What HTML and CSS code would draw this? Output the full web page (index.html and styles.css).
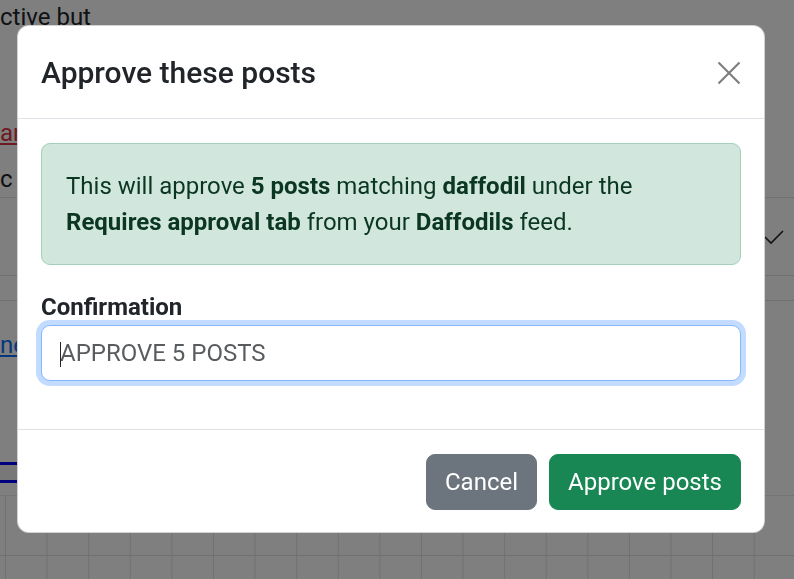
FILE: index.html
```html
<!DOCTYPE html>
<html lang="en">
<head>
<meta charset="utf-8">
<title>Approve these posts</title>
<link rel="stylesheet" href="styles.css">
</head>
<body>
<div class="page">
  <div class="pg-line pg-top">ctive but</div>
  <div class="pg-line pg-red"><a class="link-red" href="#">an</a></div>
  <div class="pg-row pg-row-a">c</div>
  <div class="pg-row pg-row-b">
    <svg class="check" width="20" height="16" viewBox="0 0 20 16"><polyline points="1,8 7,14 19,2" fill="none" stroke="#212529" stroke-width="1.6"/></svg>
  </div>
  <div class="pg-row pg-row-c"></div>
  <div class="pg-line pg-blue"><a class="link-blue" href="#">ne</a></div>
  <div class="pg-bars"></div>
  <div class="pg-grid"></div>
</div>

<div class="backdrop"></div>

<div class="modal">
  <div class="modal-header">
    <h5 class="modal-title">Approve these posts</h5>
    <button class="btn-close" type="button" aria-label="Close">
      <svg width="24" height="24" viewBox="0 0 16 16"><path d="M1 1L15 15M15 1L1 15" stroke="#000" stroke-width="1.45" fill="none"/></svg>
    </button>
  </div>
  <div class="modal-body">
    <div class="alert">This will approve <strong>5 posts</strong> matching <strong>daffodil</strong> under the <strong>Requires approval tab</strong> from your <strong>Daffodils</strong> feed.</div>
    <div class="field">
      <label class="form-label" for="confirm">Confirmation</label>
      <div class="input-wrap">
        <input id="confirm" class="form-control" type="text" placeholder="APPROVE 5 POSTS">
        <span class="caret"></span>
      </div>
    </div>
  </div>
  <div class="modal-footer">
    <button class="btn btn-secondary" type="button">Cancel</button>
    <button class="btn btn-success" type="button">Approve posts</button>
  </div>
</div>
</body>
</html>
```

FILE: styles.css
```css
* { box-sizing: border-box; }
html, body { margin: 0; padding: 0; }
body {
  font-family: Roboto, "Liberation Sans", sans-serif;
  font-size: 24px;
  line-height: 36px;
  color: #212529;
  background: #fff;
  width: 794px;
  height: 579px;
  overflow: hidden;
}

/* underlying page */
.page { width: 794px; }
.pg-line { height: 36px; line-height: 36px; white-space: nowrap; }
.pg-top { margin-top: -1px; }
.pg-red { margin-top: 80px; }
.link-red { color: #dc3545; text-decoration: underline; }
.link-blue { color: #0d6efd; text-decoration: underline; }
.pg-row { border-bottom: 1px solid #dee2e6; }
.pg-row-a { height: 47px; padding-top: 10px; line-height: 36px; }
.pg-row-b { height: 78px; display: flex; justify-content: flex-end; align-items: center; padding-right: 10px; }
.pg-row-c { height: 25px; }
.pg-blue { margin-top: 26px; }
.pg-bars {
  margin-top: 99px;
  width: 420px;
  height: 21px;
  border-top: 3px solid #0000ff;
  border-bottom: 3px solid #0000ff;
  background: #f0f0f0;
}
.pg-grid {
  margin-top: 12px;
  height: 100px;
  border-top: 1px solid #e6e8ea;
  background-image:
    linear-gradient(to bottom, transparent 59px, #dee2e6 59px, #dee2e6 60px, transparent 60px),
    linear-gradient(to right, #dee2e6 1px, transparent 1px);
  background-size: 100% 60px, 41.6px 100%;
  background-position: 0 0, 5px 0;
}

/* backdrop */
.backdrop {
  position: fixed;
  inset: 0;
  background: rgba(0, 0, 0, 0.5);
}

/* modal */
.modal {
  position: fixed;
  left: 17px;
  top: 25px;
  width: 748px;
  background: #fff;
  border: 1px solid rgba(0, 0, 0, 0.175);
  border-radius: 12px;
  display: flex;
  flex-direction: column;
}
.modal-header {
  display: flex;
  align-items: center;
  padding: 24px 23px 23px;
  border-bottom: 1px solid #dee2e6;
}
.modal-title {
  margin: 0;
  font-size: 30px;
  font-weight: 500;
  line-height: 45px;
  flex: 1;
}
.btn-close {
  border: 0;
  background: transparent;
  padding: 0;
  width: 24px;
  height: 24px;
  margin-right: 0;
  opacity: 0.5;
  display: flex;
}
.modal-body { padding: 24px 23px; }
.alert {
  background: #d1e7dd;
  border: 1px solid #a3cfbb;
  color: #0a3622;
  border-radius: 9px;
  padding: 24px 24px;
  margin-bottom: 24px;
}
.alert strong { font-weight: 700; }
.field { margin-bottom: 24px; }
.form-label {
  display: block;
  font-weight: 700;
  line-height: 36px;
}
.input-wrap { position: relative; }
.form-control {
  display: block;
  width: 100%;
  height: 56px;
  font-family: inherit;
  font-size: 24px;
  line-height: 36px;
  color: #212529;
  padding: 9px 18px;
  border: 1px solid #86b7fe;
  border-radius: 9px;
  outline: 0;
  box-shadow: 0 0 0 5px rgba(13, 110, 253, 0.25);
  background: #fff;
}
.form-control::placeholder { color: rgba(33, 37, 41, 0.75); opacity: 1; }
.caret {
  position: absolute;
  left: 19px;
  top: 17px;
  width: 1px;
  height: 25px;
  background: #212529;
}
.modal-footer {
  display: flex;
  justify-content: flex-end;
  gap: 12px;
  padding: 24px 23px 22px;
  border-top: 1px solid #dee2e6;
}
.btn {
  font-family: inherit;
  font-size: 24px;
  line-height: 36px;
  padding: 9px 18px;
  border: 1px solid transparent;
  border-radius: 9px;
  color: #fff;
}
.btn-secondary { background: #6c757d; border-color: #6c757d; }
.btn-success { background: #198754; border-color: #198754; }
```
